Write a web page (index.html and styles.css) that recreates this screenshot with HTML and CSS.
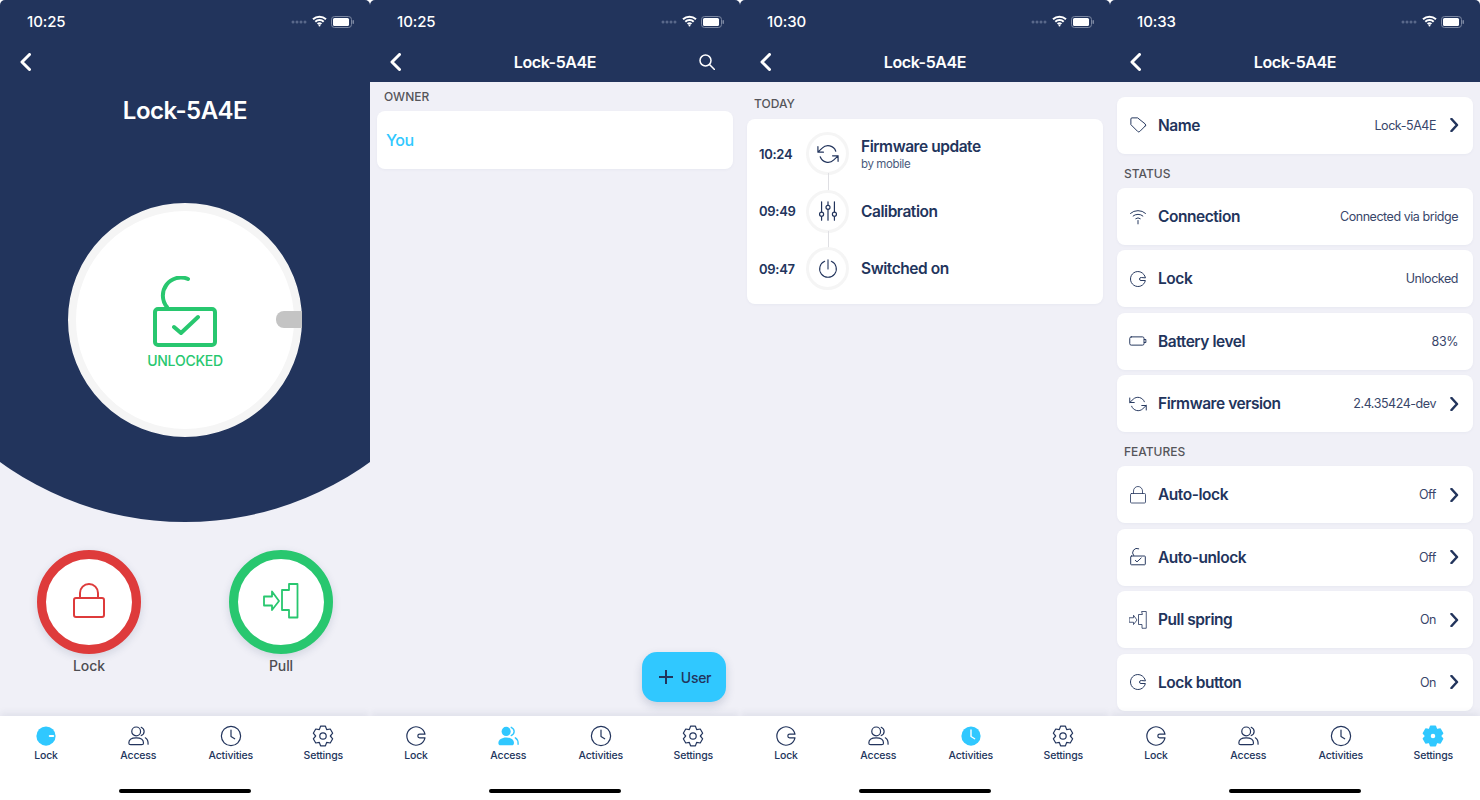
FILE: index.html
```html
<!DOCTYPE html>
<html lang="en">
<head>
<meta charset="utf-8">
<title>Lock-5A4E</title>
<link rel="stylesheet" href="styles.css">
</head>
<body>
<svg class="sprite" xmlns="http://www.w3.org/2000/svg">
  <symbol id="i-state" viewBox="0 0 24 24"><path d="M21.8 10A10 10 0 1 0 21.8 14H16a2 2 0 0 1 0-4z"/></symbol>
  <symbol id="i-access" viewBox="0 0 24 24"><circle cx="10" cy="7" r="4.8"/><path d="M2 19.5c0-3.5 3.5-5.5 8-5.5s8 2 8 5.5c0 1.500-.8 2-2 2H4c-1.200 0-2-.5-2-2z"/><path d="M15.500 2.500c2 1 3.200 2.700 3.200 4.500s-1.200 3.500-3.200 4.500M20 14c2 1.200 3.200 3.500 3 7"/></symbol>
  <symbol id="i-clock" viewBox="0 0 24 24"><circle cx="12" cy="12" r="10.500"/><path d="M12 5.500v7l4 2.500"/></symbol>
  <symbol id="i-gear" viewBox="0 0 24 24"><polygon points="9.340,1.330 14.660,1.330 16,5.070 19.910,4.360 22.570,8.970 20,12 22.570,15.030 19.910,19.640 16,18.930 14.660,22.670 9.340,22.670 8,18.930 4.090,19.640 1.430,15.030 4,12 1.430,8.970 4.090,4.360 8,5.070"/><circle cx="12" cy="12" r="3.500"/></symbol>
  <symbol id="i-sync" viewBox="0 0 24 24"><path d="M1 4v6h6M23 20v-6h-6M20.490 9A9 9 0 0 0 5.640 5.640L1 10m22 4l-4.640 4.360A9 9 0 0 1 3.510 15"/></symbol>
  <symbol id="i-sliders" viewBox="0 0 24 24"><path d="M5 2v11M5 18v4M12 2v3.500M12 10.500V22M19 2v11M19 18v4"/><circle cx="5" cy="15.500" r="2.200"/><circle cx="12" cy="8" r="2.200"/><circle cx="19" cy="15.500" r="2.200"/></symbol>
  <symbol id="i-power" viewBox="0 0 24 24"><path d="M8 2.800a10 10 0 1 0 8 0M12 1v11"/></symbol>
  <symbol id="i-tag" viewBox="0 0 24 24"><path d="M21.600 13.400l-7.200 7.200a2 2 0 0 1-2.800 0L2.500 11.500V4a1.500 1.500 0 0 1 1.500-1.500h7.500l10.100 8.100a2 2 0 0 1 0 2.800z"/></symbol>
  <symbol id="i-wifi" viewBox="0 0 24 24"><path d="M2 8.500a15 15 0 0 1 20 0M5.500 12a10 10 0 0 1 13 0M9 15.500a5 5 0 0 1 6 0M12 18v4.500"/></symbol>
  <symbol id="i-battery" viewBox="0 0 24 24"><rect x="1" y="6.500" width="19" height="11" rx="2"/><path d="M20.500 10h2v4h-2"/></symbol>
  <symbol id="i-lock" viewBox="0 0 32 36"><rect x="1" y="15" width="30" height="19" rx="2"/><path d="M7 15v-5a9 9 0 0 1 18 0v5"/></symbol>
  <symbol id="i-unlock" viewBox="0 0 68 74"><rect x="4" y="33" width="60" height="36" rx="3"/><path d="M37 3A18 18 0 0 0 16 31M23 51l7 6 17-16"/></symbol>
  <symbol id="i-pull" viewBox="0 0 36 36"><path d="M1 13.500H9V8.500L16 18 9 27V22.500H1zM26 1h8.500v33.500H26V27H19V7h7z"/></symbol>
  <symbol id="i-back" viewBox="0 0 11 18"><path d="M9.500 1.500L2 9l7.500 7.500"/></symbol>
  <symbol id="i-next" viewBox="0 0 9 14"><path d="M1.500 1l5.500 6-5.500 6"/></symbol>
  <symbol id="i-search" viewBox="0 0 16 16"><circle cx="6.500" cy="6.500" r="5.500"/><path d="M10.500 10.500L15.500 15.500"/></symbol>
</svg>

<!-- lock screen -->
<section class="phone">
  <main class="view">
    <div class="hero">
      <div class="status">
        <span class="clock-time">10:25</span>
        <span class="status-icons">
          <svg width="16" height="4" class="signal"><circle cx="2" cy="2" r="1.500"/><circle cx="6" cy="2" r="1.500"/><circle cx="10" cy="2" r="1.500"/><circle cx="14" cy="2" r="1.500"/></svg>
          <svg width="15" height="12" viewBox="0 0 15 12" class="wifi"><path d="M1 4.200a9.500 9.500 0 0 1 13 0M3.300 6.700a6 6 0 0 1 8.400 0"/><path d="M5.600 9.100a2.800 2.800 0 0 1 3.800 0"/><circle cx="7.500" cy="10.600" r="1"/></svg>
          <svg width="23" height="12" viewBox="0 0 23 12" class="batt"><rect x=".5" y=".5" width="20" height="11" rx="3"/><rect class="batt-fill" x="2" y="2" width="16" height="8" rx="1.500"/><rect class="batt-fill" x="21.500" y="4" width="1.500" height="4" rx=".7"/></svg>
        </span>
      </div>
      <div class="nav nav-bare">
        <span class="nav-side"><svg class="back" width="11" height="18"><use href="#i-back"/></svg></span>
      </div>
      <h1 class="hero-title">Lock-5A4E</h1>
      <div class="dial">
        <svg class="dial-icon" width="68" height="74"><use href="#i-unlock"/></svg>
        <span class="dial-text">UNLOCKED</span>
        <span class="dial-knob"></span>
      </div>
    </div>
    <div class="actions">
      <div class="action">
        <span class="action-ring ring-red"><svg class="ico-red" width="32" height="36"><use href="#i-lock"/></svg></span>
        <span class="action-label">Lock</span>
      </div>
      <div class="action">
        <span class="action-ring ring-green"><svg class="ico-green" width="36" height="36"><use href="#i-pull"/></svg></span>
        <span class="action-label">Pull</span>
      </div>
    </div>
  </main>
  <nav class="tabbar">
    <div class="tabs">
      <div class="tab">
        <svg width="24" height="24" viewBox="0 0 24 24"><circle class="fill-cyan" cx="12" cy="12" r="10.500"/><rect class="fill-white" x="15" y="10.800" width="6" height="2.400" rx="1.200"/></svg>
        <span>Lock</span>
      </div>
      <div class="tab"><svg class="ico" width="24" height="24"><use href="#i-access"/></svg><span>Access</span></div>
      <div class="tab"><svg class="ico" width="24" height="24"><use href="#i-clock"/></svg><span>Activities</span></div>
      <div class="tab"><svg class="ico" width="24" height="24"><use href="#i-gear"/></svg><span>Settings</span></div>
    </div>
    <div class="home-bar"></div>
  </nav>
</section>

<!-- access screen -->
<section class="phone">
  <div class="head">
    <div class="status">
      <span class="clock-time">10:25</span>
      <span class="status-icons">
        <svg width="16" height="4" class="signal"><circle cx="2" cy="2" r="1.500"/><circle cx="6" cy="2" r="1.500"/><circle cx="10" cy="2" r="1.500"/><circle cx="14" cy="2" r="1.500"/></svg>
        <svg width="15" height="12" viewBox="0 0 15 12" class="wifi"><path d="M1 4.200a9.500 9.500 0 0 1 13 0M3.300 6.700a6 6 0 0 1 8.400 0"/><path d="M5.600 9.100a2.800 2.800 0 0 1 3.800 0"/><circle cx="7.500" cy="10.600" r="1"/></svg>
        <svg width="23" height="12" viewBox="0 0 23 12" class="batt"><rect x=".5" y=".5" width="20" height="11" rx="3"/><rect class="batt-fill" x="2" y="2" width="16" height="8" rx="1.500"/><rect class="batt-fill" x="21.500" y="4" width="1.500" height="4" rx=".7"/></svg>
      </span>
    </div>
    <div class="nav">
      <span class="nav-side"><svg class="back" width="11" height="18"><use href="#i-back"/></svg></span>
      <span class="nav-title">Lock-5A4E</span>
      <span class="nav-side nav-right"><svg class="search" width="16" height="16"><use href="#i-search"/></svg></span>
    </div>
  </div>
  <main class="view list">
    <h2 class="section section-owner">OWNER</h2>
    <div class="card owner-row">You</div>
    <button class="fab"><svg width="14" height="14" viewBox="0 0 14 14"><path d="M7 0v14M0 7h14"/></svg>User</button>
  </main>
  <nav class="tabbar">
    <div class="tabs">
      <div class="tab"><svg class="ico" width="24" height="24"><use href="#i-state"/></svg><span>Lock</span></div>
      <div class="tab">
        <svg width="24" height="24" viewBox="0 0 24 24"><circle class="fill-cyan" cx="10" cy="7" r="5"/><path class="fill-cyan" d="M1.500 19.500c0-3.500 3.800-6 8.500-6s8.500 2.500 8.500 6c0 1.800-.8 2.500-2.500 2.500H4c-1.700 0-2.500-.7-2.500-2.500z"/><path class="line-cyan" d="M15.500 2.500c2 1 3.200 2.700 3.200 4.500s-1.200 3.500-3.200 4.500M20 14c2 1.200 3.200 3.500 3 7"/></svg>
        <span>Access</span>
      </div>
      <div class="tab"><svg class="ico" width="24" height="24"><use href="#i-clock"/></svg><span>Activities</span></div>
      <div class="tab"><svg class="ico" width="24" height="24"><use href="#i-gear"/></svg><span>Settings</span></div>
    </div>
    <div class="home-bar"></div>
  </nav>
</section>

<!-- activities screen -->
<section class="phone">
  <div class="head">
    <div class="status">
      <span class="clock-time">10:30</span>
      <span class="status-icons">
        <svg width="16" height="4" class="signal"><circle cx="2" cy="2" r="1.500"/><circle cx="6" cy="2" r="1.500"/><circle cx="10" cy="2" r="1.500"/><circle cx="14" cy="2" r="1.500"/></svg>
        <svg width="15" height="12" viewBox="0 0 15 12" class="wifi"><path d="M1 4.200a9.500 9.500 0 0 1 13 0M3.300 6.700a6 6 0 0 1 8.400 0"/><path d="M5.600 9.100a2.800 2.800 0 0 1 3.800 0"/><circle cx="7.500" cy="10.600" r="1"/></svg>
        <svg width="23" height="12" viewBox="0 0 23 12" class="batt"><rect x=".5" y=".5" width="20" height="11" rx="3"/><rect class="batt-fill" x="2" y="2" width="16" height="8" rx="1.500"/><rect class="batt-fill" x="21.500" y="4" width="1.500" height="4" rx=".7"/></svg>
      </span>
    </div>
    <div class="nav">
      <span class="nav-side"><svg class="back" width="11" height="18"><use href="#i-back"/></svg></span>
      <span class="nav-title">Lock-5A4E</span>
      <span class="nav-side"></span>
    </div>
  </div>
  <main class="view list">
    <h2 class="section section-today">TODAY</h2>
    <div class="card timeline">
      <div class="step">
        <span class="step-time">10:24</span>
        <span class="step-dot step-link"><svg class="ico" width="22" height="22"><use href="#i-sync"/></svg></span>
        <div class="step-text"><span class="step-title">Firmware update</span><span class="step-sub">by mobile</span></div>
      </div>
      <div class="step">
        <span class="step-time">09:49</span>
        <span class="step-dot step-link"><svg class="ico" width="22" height="22"><use href="#i-sliders"/></svg></span>
        <div class="step-text"><span class="step-title">Calibration</span></div>
      </div>
      <div class="step">
        <span class="step-time">09:47</span>
        <span class="step-dot"><svg class="ico" width="20" height="20"><use href="#i-power"/></svg></span>
        <div class="step-text"><span class="step-title">Switched on</span></div>
      </div>
    </div>
  </main>
  <nav class="tabbar">
    <div class="tabs">
      <div class="tab"><svg class="ico" width="24" height="24"><use href="#i-state"/></svg><span>Lock</span></div>
      <div class="tab"><svg class="ico" width="24" height="24"><use href="#i-access"/></svg><span>Access</span></div>
      <div class="tab">
        <svg width="24" height="24" viewBox="0 0 24 24"><circle class="fill-cyan" cx="12" cy="12" r="10.500"/><path class="line-white" d="M12 5.500v7l4 2.500"/></svg>
        <span>Activities</span>
      </div>
      <div class="tab"><svg class="ico" width="24" height="24"><use href="#i-gear"/></svg><span>Settings</span></div>
    </div>
    <div class="home-bar"></div>
  </nav>
</section>

<!-- settings screen -->
<section class="phone">
  <div class="head">
    <div class="status">
      <span class="clock-time">10:33</span>
      <span class="status-icons">
        <svg width="16" height="4" class="signal"><circle cx="2" cy="2" r="1.500"/><circle cx="6" cy="2" r="1.500"/><circle cx="10" cy="2" r="1.500"/><circle cx="14" cy="2" r="1.500"/></svg>
        <svg width="15" height="12" viewBox="0 0 15 12" class="wifi"><path d="M1 4.200a9.500 9.500 0 0 1 13 0M3.300 6.700a6 6 0 0 1 8.400 0"/><path d="M5.600 9.100a2.800 2.800 0 0 1 3.800 0"/><circle cx="7.500" cy="10.600" r="1"/></svg>
        <svg width="23" height="12" viewBox="0 0 23 12" class="batt"><rect x=".5" y=".5" width="20" height="11" rx="3"/><rect class="batt-fill" x="2" y="2" width="16" height="8" rx="1.500"/><rect class="batt-fill" x="21.500" y="4" width="1.500" height="4" rx=".7"/></svg>
      </span>
    </div>
    <div class="nav">
      <span class="nav-side"><svg class="back" width="11" height="18"><use href="#i-back"/></svg></span>
      <span class="nav-title">Lock-5A4E</span>
      <span class="nav-side"></span>
    </div>
  </div>
  <main class="view list settings">
    <div class="card row row-name">
      <svg class="ico" width="18" height="18"><use href="#i-tag"/></svg>
      <span class="row-label">Name</span><span class="row-value">Lock-5A4E</span>
      <svg class="next" width="9" height="14"><use href="#i-next"/></svg>
    </div>
    <h2 class="section">STATUS</h2>
    <div class="stack">
      <div class="card row"><svg class="ico" width="18" height="18"><use href="#i-wifi"/></svg><span class="row-label">Connection</span><span class="row-value">Connected via bridge</span></div>
      <div class="card row"><svg class="ico" width="18" height="18"><use href="#i-state"/></svg><span class="row-label">Lock</span><span class="row-value">Unlocked</span></div>
      <div class="card row"><svg class="ico" width="18" height="18"><use href="#i-battery"/></svg><span class="row-label">Battery level</span><span class="row-value">83%</span></div>
      <div class="card row"><svg class="ico" width="18" height="18"><use href="#i-sync"/></svg><span class="row-label">Firmware version</span><span class="row-value">2.4.35424-dev</span><svg class="next" width="9" height="14"><use href="#i-next"/></svg></div>
    </div>
    <h2 class="section">FEATURES</h2>
    <div class="stack">
      <div class="card row"><svg class="ico ico-slim" width="18" height="18"><use href="#i-lock"/></svg><span class="row-label">Auto-lock</span><span class="row-value">Off</span><svg class="next" width="9" height="14"><use href="#i-next"/></svg></div>
      <div class="card row"><svg class="ico ico-thin" width="18" height="18"><use href="#i-unlock"/></svg><span class="row-label">Auto-unlock</span><span class="row-value">Off</span><svg class="next" width="9" height="14"><use href="#i-next"/></svg></div>
      <div class="card row"><svg class="ico ico-slim" width="18" height="18"><use href="#i-pull"/></svg><span class="row-label">Pull spring</span><span class="row-value">On</span><svg class="next" width="9" height="14"><use href="#i-next"/></svg></div>
      <div class="card row"><svg class="ico" width="18" height="18"><use href="#i-state"/></svg><span class="row-label">Lock button</span><span class="row-value">On</span><svg class="next" width="9" height="14"><use href="#i-next"/></svg></div>
    </div>
  </main>
  <nav class="tabbar">
    <div class="tabs">
      <div class="tab"><svg class="ico" width="24" height="24"><use href="#i-state"/></svg><span>Lock</span></div>
      <div class="tab"><svg class="ico" width="24" height="24"><use href="#i-access"/></svg><span>Access</span></div>
      <div class="tab"><svg class="ico" width="24" height="24"><use href="#i-clock"/></svg><span>Activities</span></div>
      <div class="tab">
        <svg width="24" height="24" viewBox="0 0 24 24"><polygon class="gear-on" points="9.340,1.330 14.660,1.330 16,5.070 19.910,4.360 22.570,8.970 20,12 22.570,15.030 19.910,19.640 16,18.930 14.660,22.670 9.340,22.670 8,18.930 4.090,19.640 1.430,15.030 4,12 1.430,8.970 4.090,4.360 8,5.070"/><circle class="fill-white" cx="12" cy="12" r="2.500"/></svg>
        <span>Settings</span>
      </div>
    </div>
    <div class="home-bar"></div>
  </nav>
</section>
</body>
</html>
```

FILE: styles.css
```css
* {
  box-sizing: border-box;
}

body {
  margin: 0;
  width: 1480px;
  height: 800px;
  display: flex;
  overflow: hidden;
  background: #fff;
  color: #22345c;
  font-family: "Inter", "Liberation Sans", sans-serif;
}

.sprite {
  display: none;
}

.phone {
  position: relative;
  width: 370px;
  height: 800px;
  display: flex;
  flex-direction: column;
  overflow: hidden;
  background: #f0f0f7;
  border-radius: 5px 5px 0 0;
}

.view {
  flex: 1;
  min-height: 0;
  overflow: hidden;
}

/* header */
.head {
  background: #22345c;
  height: 82px;
}

.status {
  height: 44px;
  padding: 14px 16px 0 27px;
  display: flex;
  justify-content: space-between;
  align-items: flex-start;
  color: #fff;
}

.clock-time {
  font-size: 15px;
  line-height: 16px;
  font-weight: 500;
  letter-spacing: -.1px;
}

.status-icons {
  display: flex;
  align-items: center;
  gap: 5px;
  height: 16px;
}

.signal circle {
  fill: #59688a;
}

.wifi {
  margin-top: -2px;
  fill: #fff;
}

.wifi path {
  fill: none;
  stroke: #fff;
  stroke-width: 2;
}

.batt {
  margin-left: -1px;
}

.batt rect {
  fill: none;
  stroke: #7a86a0;
}

.batt .batt-fill {
  fill: #fff;
  stroke: none;
}

.batt rect:last-child {
  fill: #7a86a0;
}

.nav {
  height: 36px;
  display: flex;
  align-items: center;
  color: #fff;
}

.nav-side {
  width: 60px;
  padding-left: 20px;
  display: flex;
  align-items: center;
}

.nav-right {
  justify-content: flex-end;
  padding: 0 25px 0 0;
}

.nav-title {
  flex: 1;
  text-align: center;
  font-size: 16px;
  font-weight: 600;
  letter-spacing: -.4px;
}

.back {
  fill: none;
  stroke: #fff;
  stroke-width: 3;
  stroke-linecap: round;
  stroke-linejoin: round;
}

.search {
  fill: none;
  stroke: #fff;
  stroke-width: 1.500;
  stroke-linecap: round;
}

/* lock screen */
.hero {
  height: 522px;
  background: #22345c;
  clip-path: circle(315px at 185px 207px);
  display: flex;
  flex-direction: column;
}

.hero-title {
  margin: 14px 0 0;
  color: #fff;
  font-size: 24px;
  line-height: 34px;
  font-weight: 600;
  letter-spacing: -.5px;
  text-align: center;
}

.dial {
  position: relative;
  width: 234px;
  height: 234px;
  margin: 75px auto 0;
  padding-top: 65px;
  border: 8px solid #f5f5f5;
  border-radius: 50%;
  background: #fff;
  display: flex;
  flex-direction: column;
  align-items: center;
}

.dial-icon {
  fill: none;
  stroke: #28c76f;
  stroke-width: 4;
  stroke-linecap: round;
  stroke-linejoin: round;
}

.dial-text {
  margin-top: 2px;
  color: #28c76f;
  font-size: 14px;
  line-height: 18px;
  font-weight: 500;
  letter-spacing: -.25px;
}

.dial-knob {
  position: absolute;
  right: -8px;
  top: 100px;
  width: 26px;
  height: 17px;
  border-radius: 8px 0 0 8px;
  background: #c4c4c4;
}

.actions {
  display: flex;
  justify-content: space-between;
  padding: 28px 37px 0;
}

.action {
  width: 104px;
  display: flex;
  flex-direction: column;
  align-items: center;
}

.action-ring {
  width: 104px;
  height: 104px;
  border-radius: 50%;
  border: 9px solid;
  background: #fff;
  box-shadow: 0 3px 8px rgba(34, 52, 92, .15);
  display: flex;
  align-items: center;
  justify-content: center;
}

.action-ring svg {
  margin-top: -3px;
}

.ring-red {
  border-color: #de3b3b;
}

.ring-green {
  border-color: #28c76f;
}

.ico-red {
  fill: none;
  stroke: #de3b3b;
  stroke-width: 2;
  stroke-linejoin: round;
}

.ico-green {
  fill: none;
  stroke: #28c76f;
  stroke-width: 1.800;
  stroke-linejoin: round;
}

.action-label {
  margin-top: 2px;
  color: #4d4d52;
  font-size: 14px;
  line-height: 20px;
  font-weight: 500;
  letter-spacing: -.1px;
}

/* tab bar */
.tabbar {
  height: 84px;
  background: #fff;
  box-shadow: 0 -3px 7px rgba(34, 52, 92, .08);
  z-index: 1;
}

.tabs {
  display: flex;
  height: 73px;
  padding-top: 8px;
}

.tab {
  width: 92.500px;
  display: flex;
  flex-direction: column;
  align-items: center;
  color: #22345c;
  font-size: 10.500px;
  line-height: 16px;
  font-weight: 500;
  letter-spacing: -.2px;
}

.tab svg {
  width: 22px;
  height: 22px;
  margin: 1px 0;
}

.tab:first-child {
  width: 92px;
}

.ico {
  fill: none;
  stroke: #22345c;
  stroke-width: 1.300;
  stroke-linecap: round;
  stroke-linejoin: round;
  flex: none;
}

.ico-slim {
  stroke-width: 1.600;
}

.ico-thin {
  stroke-width: 4;
}

.fill-cyan {
  fill: #30c8ff;
}

.fill-white {
  fill: #fff;
}

.line-cyan {
  fill: none;
  stroke: #30c8ff;
  stroke-width: 1.500;
  stroke-linecap: round;
}

.line-white {
  fill: none;
  stroke: #fff;
  stroke-width: 1.500;
  stroke-linecap: round;
  stroke-linejoin: round;
}

.gear-on {
  fill: #30c8ff;
  stroke: #30c8ff;
  stroke-width: 1.500;
  stroke-linejoin: round;
}

.home-bar {
  width: 132px;
  height: 3.500px;
  margin: 0 auto;
  border-radius: 2px;
  background: #000;
}

/* lists */
.list {
  padding: 0 7px;
}

.section {
  margin: 0;
  padding: 12px 7px 6px;
  color: #55555a;
  font-size: 12px;
  line-height: 16px;
  font-weight: 500;
}

.section-owner {
  padding: 7px 7px 6px;
}

.section-today {
  padding: 14px 7px 7px;
}

.card {
  background: #fff;
  border-radius: 8px;
  box-shadow: 0 1px 3px rgba(34, 52, 92, .04);
}

.owner-row {
  height: 58px;
  padding-left: 9px;
  display: flex;
  align-items: center;
  color: #30c8ff;
  font-size: 16px;
  font-weight: 500;
  letter-spacing: -.5px;
}

.fab {
  position: absolute;
  left: 272px;
  top: 652px;
  width: 84px;
  height: 50px;
  padding: 0 3px 0 5px;
  border: none;
  border-radius: 15px;
  background: #30c8ff;
  box-shadow: 0 4px 10px rgba(34, 52, 92, .18);
  display: flex;
  align-items: center;
  justify-content: center;
  gap: 8px;
  color: #22345c;
  font-family: inherit;
  font-size: 14px;
  font-weight: 500;
  letter-spacing: -.3px;
}

.fab path {
  stroke: #22345c;
  stroke-width: 2;
}

/* timeline */
.timeline {
  height: 185px;
  padding: 6px 0;
}

.step {
  height: 57.500px;
  display: flex;
  align-items: center;
  padding-left: 12px;
}

.step-time {
  width: 47px;
  font-size: 13px;
  font-weight: 600;
  letter-spacing: -.3px;
}

.step-dot {
  position: relative;
  width: 43px;
  height: 43px;
  border: 3px solid #f5f5f5;
  border-radius: 50%;
  display: flex;
  align-items: center;
  justify-content: center;
  flex: none;
}

.step-link::after {
  content: "";
  position: absolute;
  left: 50%;
  top: 100%;
  width: 1px;
  height: 18px;
  margin-top: 1px;
  background: #dfdfe3;
}

.step-text {
  margin: 1px 0 0 12px;
  display: flex;
  flex-direction: column;
}

.step-title {
  font-size: 15.500px;
  line-height: 20px;
  font-weight: 600;
  letter-spacing: -.45px;
}

.step-sub {
  color: #4a5a7c;
  font-size: 11.500px;
  line-height: 15px;
  letter-spacing: -.4px;
}

/* settings */
.settings {
  padding-top: 15px;
}

.stack {
  display: flex;
  flex-direction: column;
  gap: 5.500px;
}

.row {
  height: 57px;
  flex: none;
  display: flex;
  align-items: center;
  padding: 0 15px 0 12px;
}

.row-name {
  height: 56.500px;
}

.row-label {
  margin-left: 11px;
  font-size: 15.500px;
  font-weight: 600;
  letter-spacing: -.45px;
}

.row-value {
  margin-left: auto;
  color: #38466a;
  font-size: 12.500px;
  letter-spacing: -.45px;
}

.next {
  margin: 0 -1px 0 14px;
  fill: none;
  stroke: #22345c;
  stroke-width: 2.500;
  stroke-linecap: round;
  stroke-linejoin: round;
  flex: none;
}
```
